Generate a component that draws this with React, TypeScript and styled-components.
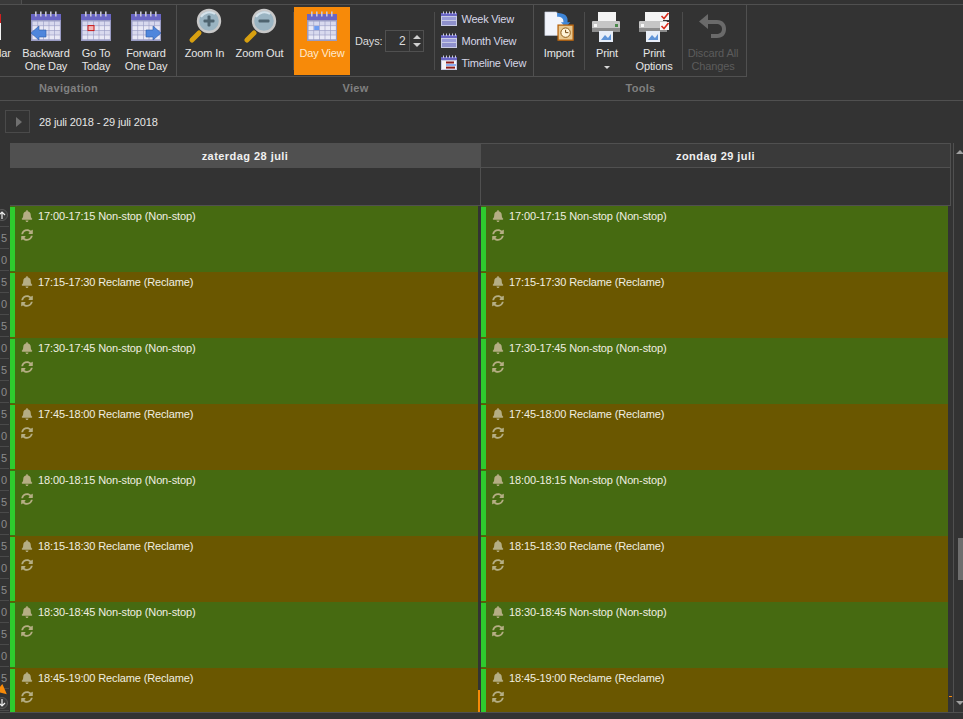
import React from "react";
import styled, { createGlobalStyle } from "styled-components";
import { FaBell, FaSyncAlt } from "react-icons/fa";

const GlobalStyle = createGlobalStyle`
  html, body {
    margin: 0;
    padding: 0;
    background: #333333;
  }
  body {
    font-family: "Liberation Sans", "Noto Sans", sans-serif;
    font-size: 11px;
    letter-spacing: -0.13px;
    color: #e6e6e6;
  }
`;

const Page = styled.div`
  width: 963px;
  height: 719px;
  overflow: hidden;
  display: flex;
  flex-direction: column;
  background: #333333;
`;

const TopStrip = styled.div`
  height: 4px;
  flex: none;
  border-bottom: 1px solid #505050;
  display: flex;
`;

const TopTab = styled.div`
  width: 21px;
  border-right: 1px solid #505050;
  background: #3a3a3a;
`;

const Ribbon = styled.div`
  flex: none;
  display: grid;
  grid-template-columns: 177px 357px 213px;
  grid-template-rows: 72px 23px;
  border-bottom: 1px solid #505050;
`;

const Group = styled.div<{ $end?: boolean }>`
  display: flex;
  align-items: flex-start;
  justify-content: ${({ $end }) => ($end ? "flex-end" : "flex-start")};
  overflow: hidden;
  border-right: 1px solid #505050;
  border-bottom: 1px solid #505050;
  padding-right: ${({ $end }) => ($end ? "5px" : "0")};
  box-sizing: border-box;
`;

const Caption = styled.div<{ $pad?: number }>`
  display: flex;
  align-items: center;
  justify-content: center;
  font-weight: 700;
  color: #808080;
  letter-spacing: 0.3px;
  padding-bottom: 2px;
  padding-right: ${({ $pad }) => $pad || 0}px;
`;

const Large = styled.div<{
  $w: number;
  $active?: boolean;
  $disabled?: boolean;
  $gap?: number;
}>`
  flex: none;
  width: ${({ $w }) => $w}px;
  height: ${({ $active }) => ($active ? "68px" : "71px")};
  margin-top: ${({ $active }) => ($active ? "2px" : "0")};
  margin-right: ${({ $gap }) => $gap || 0}px;
  padding-top: ${({ $active }) => ($active ? "4px" : "6px")};
  box-sizing: border-box;
  display: flex;
  flex-direction: column;
  align-items: center;
  text-align: center;
  line-height: 13px;
  white-space: nowrap;
  background: ${({ $active }) => ($active ? "#f78a09" : "transparent")};
  color: ${({ $active, $disabled }) =>
    $disabled ? "#5c5c5c" : $active ? "#ffe9cc" : "#e6e6e6"};
  svg {
    flex: none;
    margin-bottom: 4px;
  }
`;

const Sep = styled.div<{ $ml?: number; $mr?: number }>`
  flex: none;
  width: 1px;
  height: 58px;
  margin: 7px ${({ $mr }) => $mr || 0}px 0 ${({ $ml }) => $ml || 0}px;
  background: #4c4c4c;
`;

const DaysField = styled.div`
  flex: none;
  display: flex;
  align-items: center;
  gap: 3px;
  margin: 25px 0 0 5px;
  color: #dcdcdc;
`;

const Spinner = styled.div`
  width: 37px;
  height: 20px;
  display: flex;
  border: 1px solid #505050;
`;

const SpinValue = styled.div`
  flex: 1;
  text-align: right;
  padding-right: 4px;
  line-height: 20px;
  font-size: 12px;
  border-right: 1px solid #505050;
`;

const SpinArrows = styled.div`
  width: 13px;
  display: flex;
  flex-direction: column;
  align-items: center;
  justify-content: center;
  gap: 4px;
`;

const Tri = styled.div<{ $down?: boolean }>`
  width: 0;
  height: 0;
  border-left: 4px solid transparent;
  border-right: 4px solid transparent;
  ${({ $down }) =>
    $down ? "border-top: 4px solid #cfcfcf;" : "border-bottom: 4px solid #cfcfcf;"}
`;

const SmallStack = styled.div`
  flex: none;
  width: 92px;
  margin-left: 6px;
  padding-top: 3px;
  display: flex;
  flex-direction: column;
`;

const SmallButton = styled.div`
  height: 22px;
  display: flex;
  align-items: center;
  gap: 4px;
  color: #d6d6e6;
  white-space: nowrap;
  letter-spacing: -0.25px;
`;

const PrintArrow = styled.div`
  width: 0;
  height: 0;
  margin-top: 6px;
  border-left: 3px solid transparent;
  border-right: 3px solid transparent;
  border-top: 3px solid #d8d8d8;
`;

const DateBar = styled.div`
  flex: none;
  height: 42px;
  padding-bottom: 1px;
  box-sizing: border-box;
  display: flex;
  align-items: center;
  gap: 9px;
  padding-left: 5px;
`;

const NextButton = styled.div`
  width: 23px;
  height: 21px;
  border: 1px solid #4a4a4a;
  display: flex;
  align-items: center;
  justify-content: center;
`;

const NextTri = styled.div`
  width: 0;
  height: 0;
  border-top: 5px solid transparent;
  border-bottom: 5px solid transparent;
  border-left: 6px solid #707070;
  margin-left: 2px;
`;

const Scheduler = styled.div`
  flex: none;
  height: 569px;
  display: flex;
  border-bottom: 1px solid #505050;
  position: relative;
`;

const Ruler = styled.div`
  flex: none;
  width: 10px;
  padding-top: 62px;
  box-sizing: border-box;
  position: relative;
  overflow: hidden;
`;

const RulerCell = styled.div`
  height: 22px;
  box-sizing: border-box;
  border-bottom: 1px solid #4a4a4a;
  margin-right: 1px;
  display: flex;
  align-items: center;
  justify-content: flex-end;
  color: #8c8c8c;
  padding-right: 2px;
`;

const RulerCircle = styled.div<{ $bottom?: boolean }>`
  position: absolute;
  left: -4px;
  ${({ $bottom }) => ($bottom ? "top: 554px;" : "top: 66px;")}
  width: 12px;
  height: 12px;
  border-radius: 50%;
  background: #3b3b3b;
  border: 1px solid #5a5a5a;
  box-sizing: border-box;
`;

const NowArrow = styled.div`
  position: absolute;
  left: -2px;
  top: 543px;
  width: 0;
  height: 0;
  border-top: 5px solid transparent;
  border-bottom: 5px solid transparent;
  border-left: 10px solid #f78a09;
  transform: rotate(40deg);
`;

const DayColumn = styled.div<{ $w: number }>`
  flex: none;
  width: ${({ $w }) => $w}px;
  position: relative;
  display: flex;
  flex-direction: column;
  overflow: hidden;
`;

const DayHeader = styled.div<{ $selected?: boolean }>`
  flex: none;
  height: 25px;
  box-sizing: border-box;
  display: flex;
  align-items: center;
  justify-content: center;
  font-weight: 700;
  letter-spacing: 0.45px;
  color: #f0f0f0;
  background: ${({ $selected }) => ($selected ? "#505050" : "#3a3a3a")};
  border-top: 1px solid #505050;
  border-bottom: 1px solid #505050;
  border-right: 1px solid #505050;
`;

const AllDay = styled.div`
  flex: none;
  height: 38px;
  box-sizing: border-box;
  border-bottom: 1px solid #505050;
  border-right: 1px solid #505050;
`;

const Events = styled.div`
  flex: 1;
  display: flex;
  flex-direction: column;
  margin-right: 3px;
  overflow: hidden;
`;

const Event = styled.div<{ $kind: "green" | "brown" }>`
  flex: none;
  height: 66px;
  box-sizing: border-box;
  display: flex;
  background: ${({ $kind }) => ($kind === "green" ? "#466a11" : "#6a5700")};
`;

const EventStrip = styled.div`
  flex: none;
  width: 5px;
  margin: 1px 0;
  background: #2ecb2e;
`;

const EventBody = styled.div`
  padding: 3px 0 0 6px;
  color: #f0eee0;
  display: flex;
  flex-direction: column;
  gap: 5px;
  svg {
    color: #b5ae84;
    flex: none;
  }
`;

const EventLine = styled.div`
  display: flex;
  align-items: center;
  gap: 5px;
  height: 14px;
  white-space: nowrap;
`;

const NowLine = styled.div`
  position: absolute;
  right: 1px;
  bottom: 0;
  width: 2px;
  height: 22px;
  background: #f78a09;
`;

const Gutter = styled.div`
  flex: none;
  width: 2px;
  padding-top: 63px;
  border-right: 1px solid #505050;
  position: relative;
`;

const ScrollTick = styled.div`
  position: absolute;
  left: -2px;
  top: 553px;
  width: 3px;
  height: 1px;
  background: #f78a09;
`;

const Scrollbar = styled.div`
  flex: none;
  width: 12px;
  display: flex;
  flex-direction: column;
  align-items: flex-end;
  position: relative;
`;

const ScrollArrow = styled.div<{ $down?: boolean }>`
  align-self: center;
  margin-top: ${({ $down }) => ($down ? "auto" : "7px")};
  margin-bottom: ${({ $down }) => ($down ? "7px" : "0")};
  width: 0;
  height: 0;
  border-left: 4px solid transparent;
  border-right: 4px solid transparent;
  ${({ $down }) =>
    $down ? "border-top: 4px solid #a0a0a0;" : "border-bottom: 4px solid #a0a0a0;"}
`;

const Thumb = styled.div`
  width: 8px;
  height: 42px;
  margin-top: 384px;
  background: #6e6e6e;
`;

type CalendarMark = "left" | "right" | "today" | "day";

const CalendarIcon = ({ mark, size = 32 }: { mark?: CalendarMark; size?: number }) => {
  const cells: React.ReactNode[] = [];
  for (let r = 0; r < 4; r++) {
    for (let c = 0; c < 5; c++) {
      cells.push(
        <rect
          key={`${r}-${c}`}
          x={2.5 + c * 5.6}
          y={10.5 + r * 4.6}
          width={5}
          height={4}
          fill={r % 2 ? "#e9e9f6" : "#d8d9ee"}
        />
      );
    }
  }
  return (
    <svg width={size} height={size} viewBox="0 0 32 32">
      <rect x="1" y="3" width="30" height="27" fill="#9a9cc4" />
      <rect x="1" y="3" width="30" height="6" fill="#6a66c4" />
      {[5, 10, 15, 20, 25].map((x) => (
        <rect key={x} x={x} y="0.5" width="1.6" height="5" fill="#c8c8d8" />
      ))}
      {cells}
      {mark === "day" && <rect x="8.2" y="15" width="5" height="4" fill="#6f9cf2" />}
      {mark === "today" && (
        <rect x="8" y="14.6" width="6" height="5" fill="#f3b8b8" stroke="#c81616" />
      )}
      {mark === "left" && (
        <path d="M1 22 L9 15 V19 H16 V26 H9 V29 Z" fill="#4f86dc" stroke="#2d5aa8" strokeWidth=".6" />
      )}
      {mark === "right" && (
        <path d="M31 22 L23 15 V19 H16 V26 H23 V29 Z" fill="#4f86dc" stroke="#2d5aa8" strokeWidth=".6" />
      )}
    </svg>
  );
};

const RedCalendarIcon = () => (
  <svg width="32" height="32" viewBox="0 0 32 32" style={{ marginRight: 6 }}>
    <rect x="1" y="3" width="30" height="26" fill="#f4f4f4" />
    <rect x="1" y="3" width="30" height="9" fill="#d02020" />
  </svg>
);

const ZoomIcon = ({ minus }: { minus?: boolean }) => (
  <svg width="36" height="36" viewBox="0 0 36 36" style={{ marginTop: -3, marginBottom: 3 }}>
    <path d="M12 25 L5 32" stroke="#d8a010" strokeWidth="5" strokeLinecap="round" />
    <circle cx="22" cy="13" r="11" fill="#9ab4c2" stroke="#c8c8c8" strokeWidth="2.4" />
    <path d="M14 9 A10 10 0 0 1 28 6" stroke="#d4e2ea" strokeWidth="2" fill="none" />
    <rect x="16.5" y="11.5" width="11" height="3" rx="1" fill="#4e6470" />
    {!minus && <rect x="20.5" y="7.5" width="3" height="11" rx="1" fill="#4e6470" />}
  </svg>
);

const ImportIcon = () => (
  <svg width="32" height="32" viewBox="0 0 32 34">
    <path d="M1 1 H13 L21 8 V26 H1 Z" fill="#f2f4fb" stroke="#c4ccdc" strokeWidth=".6" />
    <path d="M14 2 C23 2 26 6 25 12 H28 L23 17 L18 12 H21 C21 8 19 6 14 6 Z" fill="#3f86d8" />
    <rect x="15" y="15" width="16" height="16" fill="#e8c890" stroke="#b8640e" strokeWidth="1.4" />
    <circle cx="23" cy="23" r="5" fill="#fff4d8" stroke="#8a5410" />
    <path d="M23 20 V23 H26" stroke="#6a3c08" fill="none" />
  </svg>
);

const PrinterIcon = ({ checks }: { checks?: boolean }) => (
  <svg width="32" height="32" viewBox="0 0 32 32">
    <rect x="7" y="1" width="18" height="10" fill="#f4f4f4" />
    <rect x="1" y="10" width="28" height="11" rx="1" fill="#c6c6c6" />
    <rect x="1" y="17" width="28" height="4" fill="#8c8c8c" />
    <rect x="3" y="13" width="3" height="3" fill="#f8f8f8" />
    <rect x="24" y="13" width="3" height="3" fill="#4c8a4c" />
    <rect x="8" y="20" width="14" height="11" fill="#e8eef8" />
    <path d="M10 29 L14 24 L17 27 L20 23 V29 Z" fill="#5f94d8" />
    {checks && (
      <>
        <rect x="22" y="1" width="9" height="8" fill="#f8f8f8" />
        <rect x="22" y="11" width="9" height="8" fill="#f8f8f8" />
        <path d="M23.5 5 L26 7.5 L30.5 2" stroke="#d82c1c" strokeWidth="1.6" fill="none" />
        <path d="M23.5 15 L26 17.5 L30.5 12" stroke="#d82c1c" strokeWidth="1.6" fill="none" />
      </>
    )}
  </svg>
);

const UndoIcon = () => (
  <svg width="32" height="32" viewBox="0 0 32 32">
    <path
      d="M11 3 L2 10.5 L11 18 V13 H19 C23 13 25 15 25 18 C25 21 23 23 19 23 H14 V27 H20 C26 27 29 23 29 18 C29 13 26 9 20 9 H11 Z"
      fill="#6a6a6a"
    />
  </svg>
);

const SmallWeekIcon = ({ timeline }: { timeline?: boolean }) => (
  <svg width="16" height="16" viewBox="0 0 16 16">
    <rect x="0" y="2" width="16" height="13" fill="#c8cae4" />
    <rect x="0" y="2" width="16" height="3" fill="#6a66c4" />
    {[2, 5, 8, 11, 14].map((x) => (
      <rect key={x} x={x} y="0.5" width="1" height="2.5" fill="#c8c8d8" />
    ))}
    {timeline ? (
      <>
        <rect x="1" y="6" width="14" height="8" fill="#f4f4f8" />
        <rect x="5" y="6.5" width="8" height="2" fill="#8c1c1c" />
        <rect x="5" y="9.2" width="10" height="1.6" fill="#6f9cf2" />
        <rect x="5" y="11.6" width="9" height="2" fill="#8c1c1c" />
      </>
    ) : (
      <>
        <rect x="1" y="6" width="14" height="3" fill="#9a9cd8" />
        <rect x="1" y="10" width="14" height="4" fill="#8e90cc" />
      </>
    )}
  </svg>
);

const CircleArrow = ({ down }: { down?: boolean }) => (
  <svg width="10" height="10" viewBox="0 0 10 10">
    <path
      d={down ? "M5 1 V8 M2 5 L5 8 L8 5" : "M5 9 V2 M2 5 L5 2 L8 5"}
      stroke="#eeeeee"
      strokeWidth="1.2"
      fill="none"
    />
  </svg>
);

const times = [
  "17:00-17:15",
  "17:15-17:30",
  "17:30-17:45",
  "17:45-18:00",
  "18:00-18:15",
  "18:15-18:30",
  "18:30-18:45",
  "18:45-19:00",
];

// first and last cell sit behind the scroll circles
const rulerDigits = Array.from({ length: 23 }, (_, i) =>
  i === 0 || i === 22 ? "" : i % 2 ? "5" : "0"
);

const DayEvents = () => (
  <Events>
    {times.map((time, i) => {
      const name = i % 2 ? "Reclame" : "Non-stop";
      return (
        <Event key={time} $kind={i % 2 ? "brown" : "green"}>
          <EventStrip />
          <EventBody>
            <EventLine>
              <FaBell size={12} />
              {time} {name} ({name})
            </EventLine>
            <EventLine>
              <FaSyncAlt size={12} />
            </EventLine>
          </EventBody>
        </Event>
      );
    })}
  </Events>
);

export default function App() {
  return (
    <Page>
      <GlobalStyle />
      <TopStrip>
        <TopTab />
      </TopStrip>
      <Ribbon>
        <Group $end>
          <Large $w={50} $gap={7}>
            <RedCalendarIcon />
            Calendar
          </Large>
          <Large $w={50}>
            <CalendarIcon mark="left" />
            Backward
            <br />
            One Day
          </Large>
          <Large $w={50}>
            <CalendarIcon mark="today" />
            Go To
            <br />
            Today
          </Large>
          <Large $w={50}>
            <CalendarIcon mark="right" />
            Forward
            <br />
            One Day
          </Large>
        </Group>
        <Group>
          <Large $w={55}>
            <ZoomIcon />
            Zoom In
          </Large>
          <Large $w={55}>
            <ZoomIcon minus />
            Zoom Out
          </Large>
          <Sep $ml={6} />
          <Large $w={56} $active>
            <CalendarIcon mark="day" />
            Day View
          </Large>
          <DaysField>
            Days:
            <Spinner>
              <SpinValue>2</SpinValue>
              <SpinArrows>
                <Tri />
                <Tri $down />
              </SpinArrows>
            </Spinner>
          </DaysField>
          <Sep $ml={10} />
          <SmallStack>
            <SmallButton>
              <SmallWeekIcon />
              Week View
            </SmallButton>
            <SmallButton>
              <SmallWeekIcon />
              Month View
            </SmallButton>
            <SmallButton>
              <SmallWeekIcon timeline />
              Timeline View
            </SmallButton>
          </SmallStack>
        </Group>
        <Group>
          <Large $w={50}>
            <ImportIcon />
            Import
          </Large>
          <Sep />
          <Large $w={44}>
            <PrinterIcon />
            Print
            <PrintArrow />
          </Large>
          <Large $w={50}>
            <PrinterIcon checks />
            Print
            <br />
            Options
          </Large>
          <Sep $ml={3} />
          <Large $w={60} $disabled>
            <UndoIcon />
            Discard All
            <br />
            Changes
          </Large>
        </Group>
        <Caption $pad={40}>Navigation</Caption>
        <Caption>View</Caption>
        <Caption>Tools</Caption>
      </Ribbon>
      <DateBar>
        <NextButton>
          <NextTri />
        </NextButton>
        28 juli 2018 - 29 juli 2018
      </DateBar>
      <Scheduler>
        <Ruler>
          {rulerDigits.map((digit, i) => (
            <RulerCell key={i}>{digit}</RulerCell>
          ))}
          <RulerCircle>
            <CircleArrow />
          </RulerCircle>
          <NowArrow />
          <RulerCircle $bottom>
            <CircleArrow down />
          </RulerCircle>
        </Ruler>
        <DayColumn $w={471}>
          <DayHeader $selected>zaterdag 28 juli</DayHeader>
          <AllDay />
          <DayEvents />
          <NowLine />
        </DayColumn>
        <DayColumn $w={470}>
          <DayHeader>zondag 29 juli</DayHeader>
          <AllDay />
          <DayEvents />
        </DayColumn>
        <Gutter>
          <ScrollTick />
        </Gutter>
        <Scrollbar>
          <ScrollArrow />
          <Thumb />
          <ScrollArrow $down />
        </Scrollbar>
      </Scheduler>
    </Page>
  );
}
